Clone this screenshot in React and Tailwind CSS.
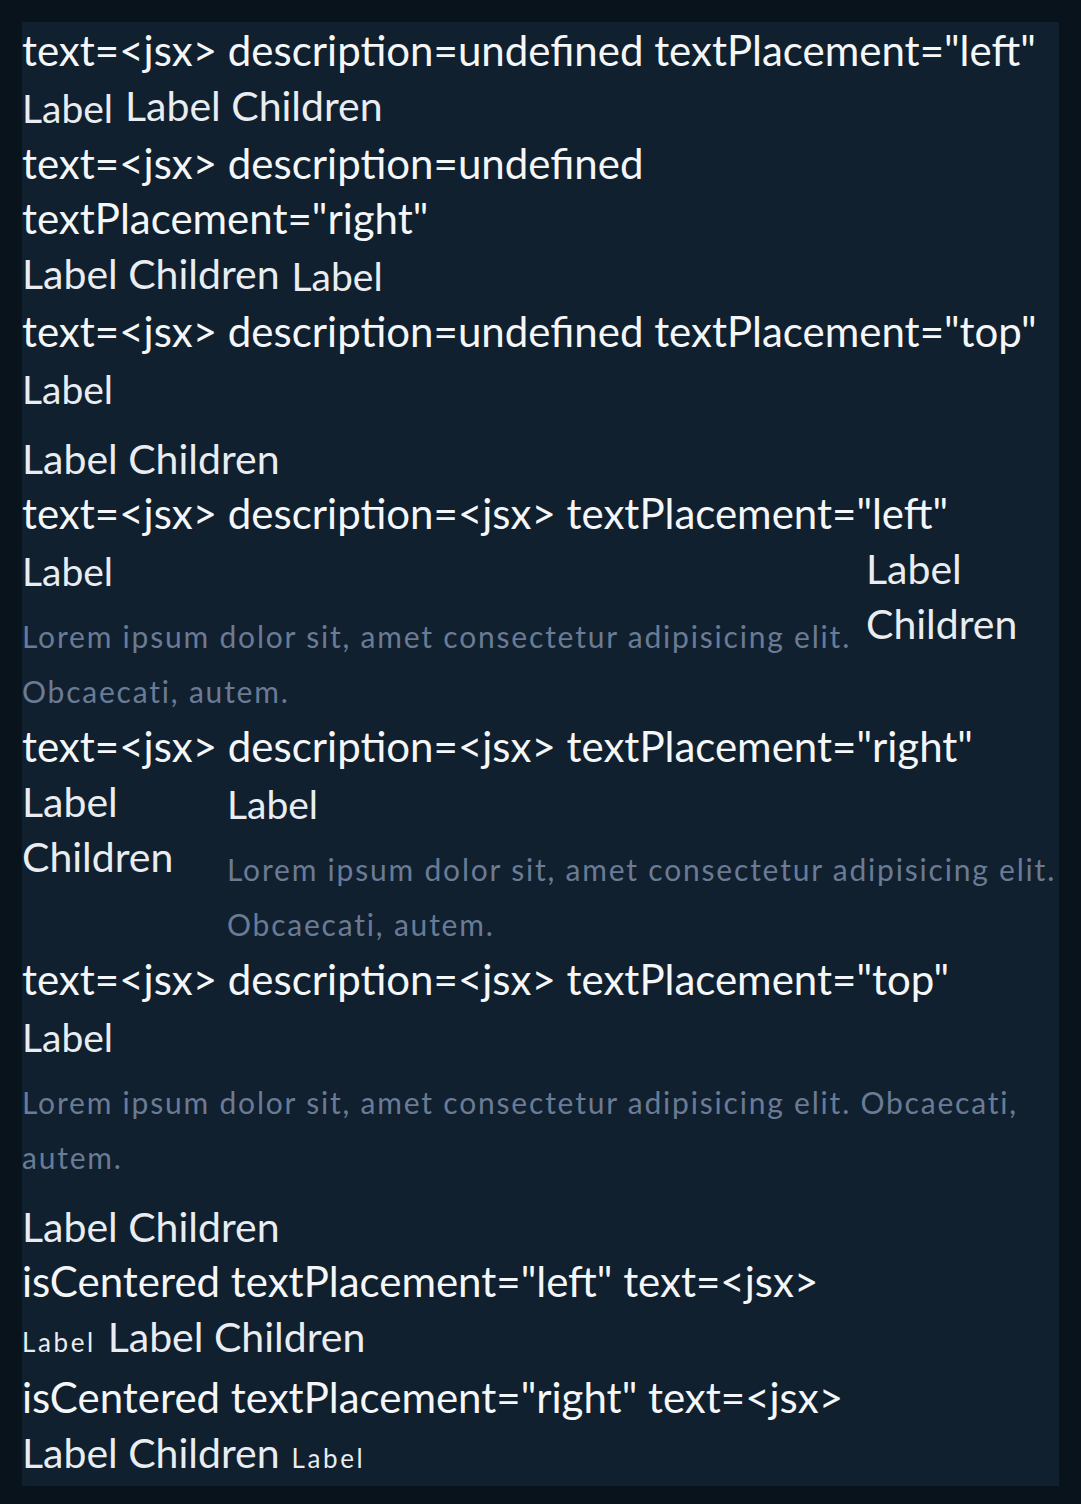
import React from 'react';

const desc = 'Lorem ipsum dolor sit, amet consectetur adipisicing elit. Obcaecati, autem.';

const Heading = ({ children }) => <div className="text-[42px] text-[#f4f6f8]">{children}</div>;

const TextLabel = () => <span className="pt-[3px] text-[39px]">Label</span>;

const Description = () => (
  <p className="mt-[10px] text-[30px] leading-[55px] tracking-[1.8px] text-[#6b7b95]">{desc}</p>
);

const SmallLabel = () => <span className="text-[26px] tracking-[2.6px]">Label</span>;

const App = () => {
  return (
    <div className="min-h-screen bg-[#09131c] p-[22px] font-['Lato',sans-serif]">
      <div className="bg-[#10202f] pt-[1px] text-[41px] leading-[55px] text-[#e9edf1]">
        {/* text only, left */}
        <Heading>text=&lt;jsx&gt; description=undefined textPlacement="left"</Heading>
        <div className="flex items-start gap-3">
          <TextLabel />
          <span>Label Children</span>
        </div>

        {/* text only, right */}
        <Heading>
          text=&lt;jsx&gt; description=undefined
          <br />
          textPlacement="right"
        </Heading>
        <div className="flex items-start gap-3">
          <span>Label Children</span>
          <TextLabel />
        </div>

        {/* text only, top */}
        <Heading>text=&lt;jsx&gt; description=undefined textPlacement="top"</Heading>
        <div className="flex flex-col gap-[14px]">
          <TextLabel />
          <span>Label Children</span>
        </div>

        {/* with description, left */}
        <Heading>text=&lt;jsx&gt; description=&lt;jsx&gt; textPlacement="left"</Heading>
        <div className="flex items-start gap-3">
          <div className="flex w-[832px] shrink-0 flex-col">
            <TextLabel />
            <Description />
          </div>
          <span className="min-w-0">Label Children</span>
        </div>

        {/* with description, right */}
        <Heading>text=&lt;jsx&gt; description=&lt;jsx&gt; textPlacement="right"</Heading>
        <div className="flex items-start gap-3">
          <span className="min-w-0 flex-1">Label Children</span>
          <div className="flex w-[832px] shrink-0 flex-col">
            <TextLabel />
            <Description />
          </div>
        </div>

        {/* with description, top */}
        <Heading>text=&lt;jsx&gt; description=&lt;jsx&gt; textPlacement="top"</Heading>
        <div className="flex flex-col gap-[14px]">
          <div className="flex flex-col">
            <TextLabel />
            <Description />
          </div>
          <span>Label Children</span>
        </div>

        {/* centered */}
        <Heading>isCentered textPlacement="left" text=&lt;jsx&gt;</Heading>
        <div className="flex items-baseline gap-3">
          <SmallLabel />
          <span>Label Children</span>
        </div>

        <Heading>isCentered textPlacement="right" text=&lt;jsx&gt;</Heading>
        <div className="flex items-baseline gap-3">
          <span>Label Children</span>
          <SmallLabel />
        </div>
      </div>
    </div>
  );
};

export default App;
